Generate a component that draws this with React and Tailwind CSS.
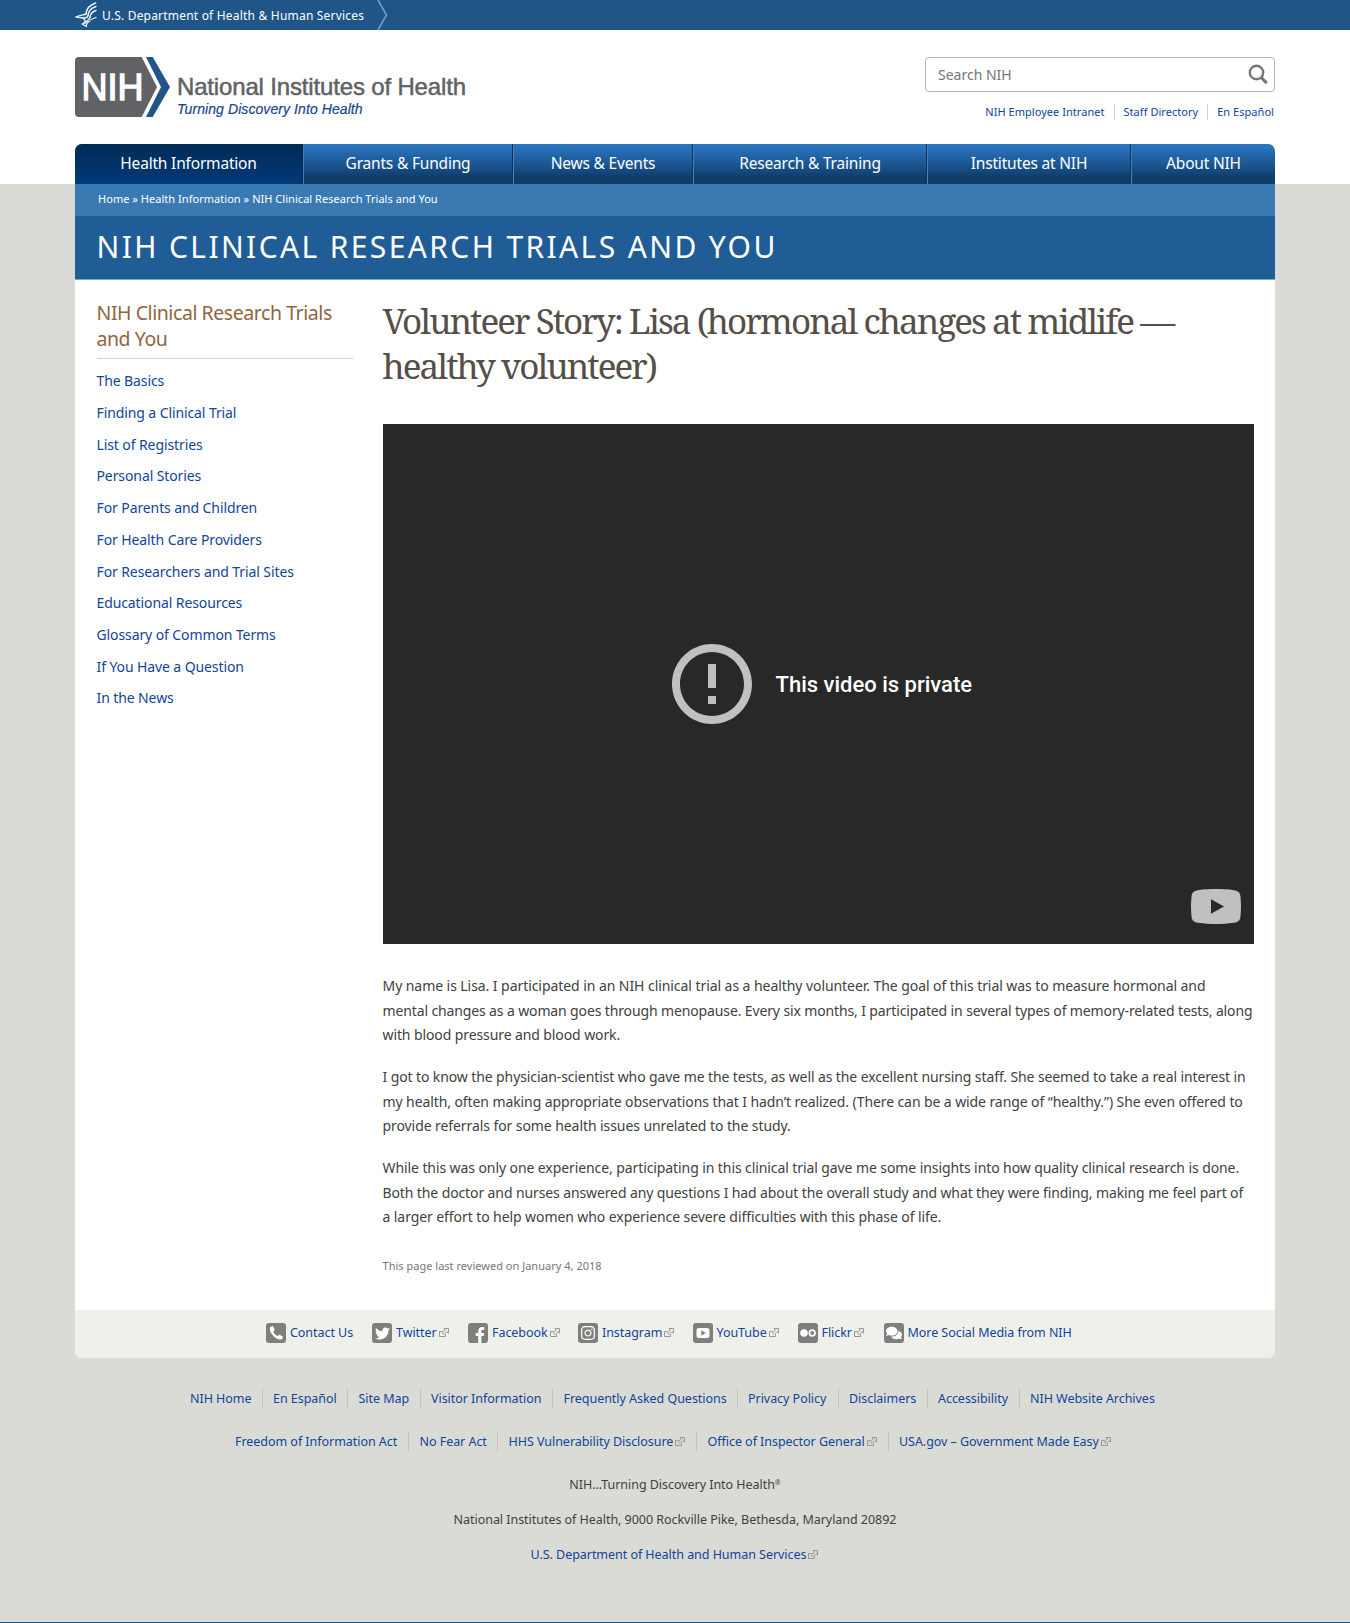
import {
  FaPhoneAlt,
  FaTwitter,
  FaFacebookF,
  FaInstagram,
  FaComments,
} from "react-icons/fa";

const navItems = [
  { label: "Health Information", cls: "w-[228px] border-r border-[#05264a] bg-linear-to-b from-[#002b55] to-[#003a78]" },
  { label: "Grants & Funding", cls: "w-[210px] border-r border-r-[#0b3560] border-l border-l-[#4a7fb5]" },
  { label: "News & Events", cls: "w-[180px] border-r border-r-[#0b3560] border-l border-l-[#4a7fb5]" },
  { label: "Research & Training", cls: "w-[234px] border-r border-r-[#0b3560] border-l border-l-[#4a7fb5]" },
  { label: "Institutes at NIH", cls: "w-[204px] border-r border-r-[#0b3560] border-l border-l-[#4a7fb5]" },
  { label: "About NIH", cls: "w-[144px] border-l border-l-[#4a7fb5]" },
];

const sideLinks = [
  "The Basics",
  "Finding a Clinical Trial",
  "List of Registries",
  "Personal Stories",
  "For Parents and Children",
  "For Health Care Providers",
  "For Researchers and Trial Sites",
  "Educational Resources",
  "Glossary of Common Terms",
  "If You Have a Question",
  "In the News",
];

const paragraphs = [
  [
    ["My name is Lisa. I participated in an NIH clinical trial as a healthy volunteer. The goal of this trial was to measure hormonal and", "tracking-[-0.065px]"],
    ["mental changes as a woman goes through menopause. Every six months, I participated in several types of memory-related tests, along", "tracking-[-0.128px]"],
    ["with blood pressure and blood work.", "tracking-[-0.1px]"],
  ],
  [
    ["I got to know the physician-scientist who gave me the tests, as well as the excellent nursing staff. She seemed to take a real interest in", "tracking-[-0.106px]"],
    ["my health, often making appropriate observations that I hadn’t realized. (There can be a wide range of “healthy.”) She even offered to", "tracking-[-0.093px]"],
    ["provide referrals for some health issues unrelated to the study.", "tracking-[-0.08px]"],
  ],
  [
    ["While this was only one experience, participating in this clinical trial gave me some insights into how quality clinical research is done.", "tracking-[-0.09px]"],
    ["Both the doctor and nurses answered any questions I had about the overall study and what they were finding, making me feel part of", "tracking-[-0.112px]"],
    ["a larger effort to help women who experience severe difficulties with this phase of life.", "tracking-[-0.083px]"],
  ],
];

const footerOne = [
  ["NIH Home", "w-[72.5px]"],
  ["En Español", "w-[75px]"],
  ["Site Map", "w-[62px]"],
  ["Visitor Information", "w-[122px]"],
  ["Frequently Asked Questions", "w-[174px]"],
  ["Privacy Policy", "w-[90.5px]"],
  ["Disclaimers", "w-[78.5px]"],
  ["Accessibility", "w-[81.5px]"],
  ["NIH Website Archives", ""],
];

const footerTwo = [
  ["Freedom of Information Act", "w-[174px]", false],
  ["No Fear Act", "w-[78.5px]", false],
  ["HHS Vulnerability Disclosure", "w-[188.5px]", true],
  ["Office of Inspector General", "w-[181px]", true],
  ["USA.gov – Government Made Easy", "", true],
];

function External() {
  return (
    <svg viewBox="0 0 12 12" className="ml-px h-3 w-3 shrink-0" fill="none" stroke="#999994" strokeWidth="1">
      <path d="M4.500 4.500h-3v5h6v-2" />
      <path d="M6 1.500h4.500V6L9 4.700 6 7.700 4.300 6 7.300 3z" strokeLinejoin="round" />
    </svg>
  );
}

function Chip({ children }) {
  return (
    <span className="mr-1 flex h-5 w-5 shrink-0 items-center justify-center rounded-[3px] bg-[#7f7f7d] text-white">
      {children}
    </span>
  );
}

const social = [
  { label: "Contact Us", cls: "w-[106px]", icon: (
      <svg viewBox="0 0 20 20" className="h-5 w-5" fill="#fff">
        <path d="M5.800 3.200L3.900 4.500c-1 5.500 6 12.800 11.700 12l1.200-2.100c.2-.4.1-.7-.2-.9l-2.700-1.700c-.4-.2-.8-.2-1.100.1l-1.100 1.200c-2-.9-3.700-2.700-4.500-4.700l1.200-1.100c.3-.3.4-.6.2-1L7 3.500c-.3-.4-.8-.6-1.200-.3z" />
      </svg>
    ) },
  { label: "Twitter", cls: "w-[96px]", ext: true, icon: <FaTwitter size={15} /> },
  { label: "Facebook", cls: "w-[110px]", ext: true, icon: <FaFacebookF size={16} className="mt-1 ml-1" /> },
  { label: "Instagram", cls: "w-[114.500px]", ext: true, icon: <FaInstagram size={16} /> },
  {
    label: "YouTube",
    cls: "w-[105px]",
    ext: true,
    icon: (
      <svg viewBox="0 0 20 20" className="h-5 w-5">
        <rect x="3.5" y="5" width="13" height="10" rx="2.5" fill="#fff" />
        <path d="M8.3 7.3v5.4l4.4-2.7z" fill="#7f7f7d" />
      </svg>
    ),
  },
  {
    label: "Flickr",
    cls: "w-[86px]",
    ext: true,
    icon: (
      <svg viewBox="0 0 20 20" className="h-5 w-5">
        <circle cx="6" cy="10" r="3.8" fill="#fff" />
        <circle cx="14.2" cy="10" r="2.8" fill="none" stroke="#fff" strokeWidth="1.8" />
      </svg>
    ),
  },
  { label: "More Social Media from NIH", cls: "", icon: <FaComments size={16} /> },
];

function HhsMark() {
  return (
    <svg viewBox="0 0 22 26" className="h-[26px] w-[22px]" fill="none" stroke="#e8f1fa" strokeLinecap="round" strokeLinejoin="round">
      <path d="M20.5 1C14.500 3 11.500 6.500 11 12" strokeWidth="1.6" />
      <path d="M21 4.500C16 6 13.500 9 13 13.500" strokeWidth="1.5" />
      <path d="M21 8.500C17.500 9.500 15.500 11.500 15 15" strokeWidth="1.4" />
      <path d="M11 12C9 13 5.500 12.800 1 15l6 .8c2.500.5 3.500 3 3 5.200" strokeWidth="1.5" />
      <path d="M13 13.500c-.5 2-2.500 2.500-4.500 2.300M15 15c-.8 3.500-3 5-8 7l4.500 2.500c-.5-2 .5-4 3.500-5.500" strokeWidth="1.3" />
      <path d="M16 17.500l5-2" strokeWidth="1.3" />
    </svg>
  );
}

export default function App() {
  return (
    <div className="flex h-[1623px] w-[1350px] flex-col overflow-hidden bg-[#dadbd4] font-['Noto_Sans',sans-serif] text-[#414141]">
      <div className="h-[30px] shrink-0 bg-[#205587] px-[75px]">
        <div className="flex h-full items-center">
          <HhsMark />
          <span className="ml-[5px] w-[275px] pt-px text-[12px] tracking-[0.2px] whitespace-nowrap text-white">
            U.S. Department of Health &amp; Human Services
          </span>
          <svg viewBox="0 0 12 30" className="h-[30px] w-3" fill="none" stroke="#6f9cc8" strokeWidth="1.6">
            <path d="M1 0l8.500 15L1 30" />
          </svg>
        </div>
      </div>

      <header className="h-[154px] shrink-0 bg-white px-[75px]">
        <div className="flex h-[114px] justify-between pt-[27px]">
          <div className="flex">
            <svg viewBox="0 0 95 60" className="h-[60px] w-[95px]">
              <path d="M4 0H66.700L82 30 66.700 60H4a4 4 0 0 1-4-4V4a4 4 0 0 1 4-4z" fill="#616265" />
              <path d="M71 0H77.700L95 30 77.700 60H71L86 30z" fill="#20558a" />
              <text x="6.500" y="43" textLength="62" lengthAdjust="spacingAndGlyphs" fill="#fff" stroke="#fff" strokeWidth="1.300" fontFamily="Liberation Sans" fontSize="36.500">
                NIH
              </text>
            </svg>
            <div className="ml-[7px] pt-[18px] font-['Liberation_Sans',sans-serif]">
              <div className="text-[24px] leading-6 tracking-[-0.16px] text-[#616265] [-webkit-text-stroke:0.5px_#616265]">
                National Institutes of Health
              </div>
              <div className="pt-px text-[14px] leading-[18px] tracking-[0.08px] text-[#20458c] italic [-webkit-text-stroke:0.2px_#20458c]">
                Turning Discovery Into Health
              </div>
            </div>
          </div>
          <div className="flex w-[350px] flex-col items-end">
            <div className="flex h-[35px] w-full items-center justify-between rounded-[4px] border border-[#b4b4b4] pr-[6px] pl-3">
              <span className="text-[14px] text-[#757575]">Search NIH</span>
              <svg viewBox="0 0 20 21" className="h-[21px] w-5" fill="none" stroke="#777">
                <circle cx="8.500" cy="8.500" r="6.700" strokeWidth="2.400" />
                <path d="M13.200 13.500l5.500 5.700" strokeWidth="3.200" />
              </svg>
            </div>
            <div className="mt-3 flex h-4 items-center pr-px text-[11px] leading-4 tracking-[0.04px] whitespace-nowrap text-[#0f459c]">
              <span className="pr-[9px]">NIH Employee Intranet</span>
              <span className="border-l border-[#cfcfcf] px-[9px]">Staff Directory</span>
              <span className="border-l border-[#cfcfcf] pl-[9px]">En Español</span>
            </div>
          </div>
        </div>
        <nav className="flex h-10 overflow-hidden rounded-t-[7px] bg-linear-to-b from-[#2b75bf] from-5% via-[#1b5793] via-50% to-[#0f3b69] to-85%">
          {navItems.map((n) => (
            <div key={n.label} className={`flex items-center justify-center pb-px text-[15.5px] tracking-[-0.19px] whitespace-nowrap text-white ${n.cls}`}>
              {n.label}
            </div>
          ))}
        </nav>
      </header>

      <div className="mx-[75px] flex h-8 shrink-0 items-center bg-[#3a7ab3] pb-[2px] pl-[23px] text-[11px] tracking-[0.035px] text-white">
        Home » Health Information » NIH Clinical Research Trials and You
      </div>
      <div className="mx-[75px] flex h-16 shrink-0 items-center border-b border-[#7fa8d0] bg-[#205c96] pb-[2px] pl-[21.500px] text-[30px] tracking-[2.370px] text-white">
        NIH CLINICAL RESEARCH TRIALS AND YOU
      </div>

      <main className="mx-[75px] flex h-[1030px] shrink-0 bg-white pl-[21.500px]">
        <aside className="w-[256px] pt-[19.500px]">
          <h2 className="border-b border-[#d2d2d2] pb-[6.500px] text-[19.500px] leading-[26px] tracking-[-0.440px] text-[#8f6541]">
            NIH Clinical Research Trials
            <br />
            and You
          </h2>
          <ul className="pt-[6.400px]">
            {sideLinks.map((l) => (
              <li key={l} className="h-[31.700px] text-[14px] leading-[31.700px] tracking-[-0.1px] text-[#0f459c]">
                {l}
              </li>
            ))}
          </ul>
        </aside>
        <article className="ml-[30px] w-[871.500px] pt-[18px]">
          <h1 className="font-['Noto_Serif',serif] text-[35px] leading-[45px] tracking-[-1.960px] whitespace-nowrap text-[#564e48]">
            Volunteer Story: Lisa (hormonal changes at midlife —
            <br />
            healthy volunteer)
          </h1>
          <div className="mt-9 flex h-[520px] items-center bg-[#282828] pl-[289px]">
            <svg viewBox="2 2 20 20" className="h-20 w-20 shrink-0" fill="#c0c0c0">
              <path d="M11 15h2v2h-2zm0-8h2v6h-2zm.990-5C6.470 2 2 6.480 2 12s4.470 10 9.990 10C17.520 22 22 17.520 22 12S17.520 2 11.990 2zM12 20c-4.420 0-8-3.580-8-8s3.580-8 8-8 8 3.580 8 8-3.580 8-8 8z" />
            </svg>
            <span className="ml-6 font-['Roboto',sans-serif] text-[22px] font-medium whitespace-nowrap text-white">
              This video is private
            </span>
            <svg viewBox="0 0 50 35" className="mt-auto mr-[13.500px] mb-[20.500px] ml-auto h-[35px] w-[50px]">
              <path d="M7 1.200C13 .2 19 0 25 0s12 .2 18 1.200c4 .6 6 2.300 6.400 5.800.8 7 .8 14 0 21-.4 3.500-2.400 5.200-6.400 5.800-6 1-12 1.200-18 1.200s-12-.2-18-1.200c-4-.6-6-2.300-6.400-5.800-.8-7-.8-14 0-21C1 3.500 3 1.800 7 1.200z" fill="#c0c0c0" />
              <path d="M20 10.200v14.600l13-7.300z" fill="#282828" />
            </svg>
          </div>
          <div className="pt-[30px]">
            {paragraphs.map((p, i) => (
              <p key={i} className="mb-[17.500px] text-[14px] leading-[24.500px] whitespace-nowrap">
                {p.map(([line, tracking]) => (
                  <span key={line} className={`block ${tracking}`}>
                    {line}
                  </span>
                ))}
              </p>
            ))}
          </div>
          <div className="mt-7 text-[11px] leading-4 tracking-[0.015px] text-[#777]">This page last reviewed on January 4, 2018</div>
        </article>
      </main>

      <div className="mx-[75px] flex h-12 shrink-0 items-center rounded-b-[7px] bg-[#f0f0ea] pb-[2px] pl-[191px]">
        {social.map((s) => (
          <div key={s.label} className={`flex items-center text-[12.500px] tracking-[-0.05px] whitespace-nowrap text-[#0f459c] ${s.cls}`}>
            <Chip>{s.icon}</Chip>
            {s.label}
            {s.ext && <External />}
          </div>
        ))}
      </div>

      <footer className="pt-[30px] text-[12.500px] leading-[21px] tracking-[-0.04px] text-[#414141]">
        <div className="flex pl-[190px] text-[#0f459c]">
          {footerOne.map(([label, w], i) => (
            <div key={label} className={`mr-[10.500px] flex h-[21px] whitespace-nowrap ${w} ${i < footerOne.length - 1 ? "border-r border-[#c3c4bd]" : ""}`}>
              {label}
            </div>
          ))}
        </div>
        <div className="mt-[22px] flex pl-[235px] text-[#0f459c]">
          {footerTwo.map(([label, w, ext], i) => (
            <div key={label} className={`mr-[10.500px] flex h-[21px] items-center whitespace-nowrap ${w} ${i < footerTwo.length - 1 ? "border-r border-[#c3c4bd]" : ""}`}>
              {label}
              {ext && <External />}
            </div>
          ))}
        </div>
        <div className="mt-[22px] text-center">
          NIH...Turning Discovery Into Health<span className="relative -top-1 text-[7px] leading-none">®</span>
        </div>
        <div className="mt-[14px] text-center">National Institutes of Health, 9000 Rockville Pike, Bethesda, Maryland 20892</div>
        <div className="mt-[14px] flex items-center justify-center text-[#0f459c]">
          U.S. Department of Health and Human Services
          <External />
        </div>
      </footer>
      <div className="mt-auto h-px shrink-0 bg-[#205587]" />
    </div>
  );
}
